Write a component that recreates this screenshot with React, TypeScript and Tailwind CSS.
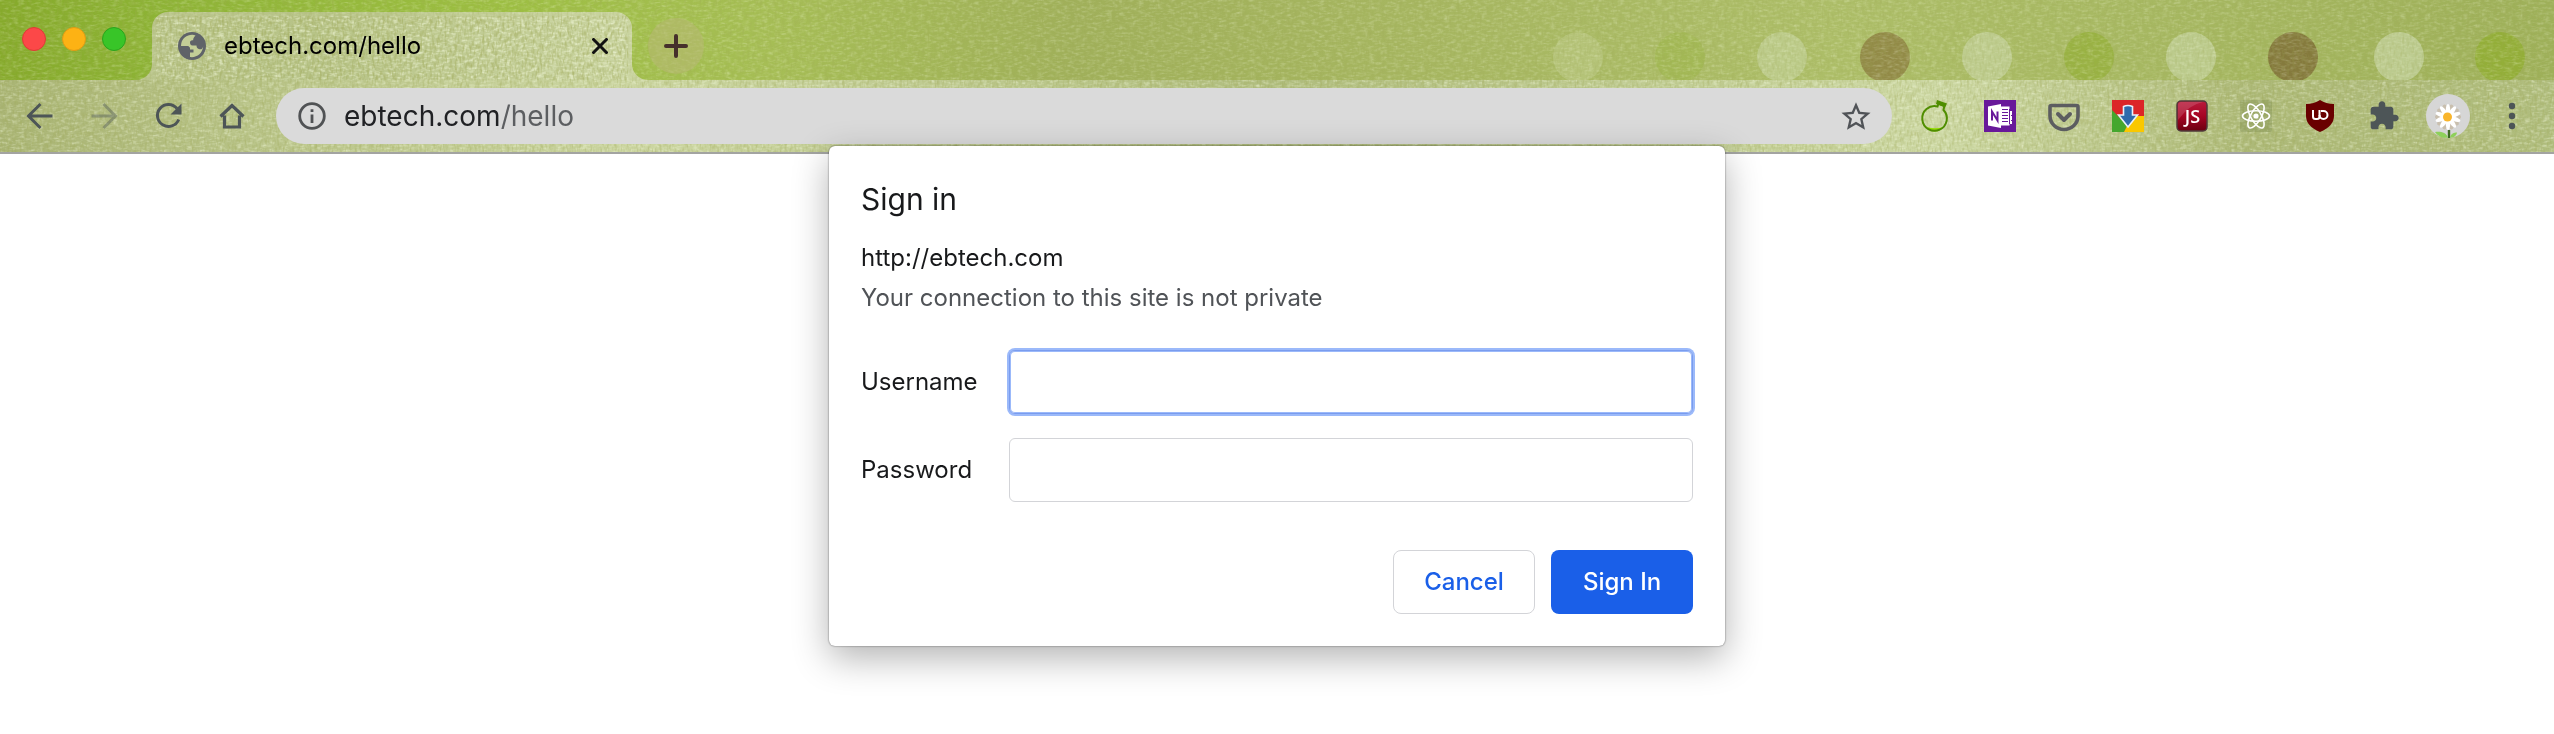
import React from "react";

const EXT = "flex h-11 w-11 shrink-0 items-center justify-center";

function Fabric() {
  const dots: [number, string, number][] = [
    [1578, "#c3d092", 0.45],
    [1680, "#93b431", 0.3],
    [1782, "#c6d3a0", 0.6],
    [1885, "#8a7a3c", 0.75],
    [1987, "#c6d3a0", 0.7],
    [2089, "#8fae2e", 0.6],
    [2191, "#c6d3a0", 0.7],
    [2293, "#7d6b35", 0.8],
    [2399, "#c6d3a0", 0.75],
    [2500, "#8fae2e", 0.75],
  ];
  return (
    <svg className="absolute inset-0 h-full w-full" aria-hidden="true">
      <defs>
        <linearGradient id="frame">
          <stop offset="0" stopColor="#86aa2b" />
          <stop offset="0.06" stopColor="#8db335" />
          <stop offset="0.2" stopColor="#9dbf42" />
          <stop offset="0.3" stopColor="#a6be55" />
          <stop offset="0.42" stopColor="#a0b05a" />
          <stop offset="0.55" stopColor="#a6b660" />
          <stop offset="0.72" stopColor="#adbe68" />
          <stop offset="1" stopColor="#9eb059" />
        </linearGradient>
        <linearGradient id="bar">
          <stop offset="0" stopColor="#a9b474" />
          <stop offset="0.1" stopColor="#b9c489" />
          <stop offset="0.25" stopColor="#ccd6a2" />
          <stop offset="0.5" stopColor="#b0bd7e" />
          <stop offset="0.76" stopColor="#cdd8a4" />
          <stop offset="0.88" stopColor="#adb978" />
          <stop offset="1" stopColor="#b0bd7e" />
        </linearGradient>
        <linearGradient id="bar-tab">
          <stop offset="0" stopColor="#bac58c" />
          <stop offset="0.35" stopColor="#b7c387" />
          <stop offset="1" stopColor="#cbd5a2" />
        </linearGradient>
        <filter id="weft" x="0" y="0" width="100%" height="100%">
          <feTurbulence type="fractalNoise" baseFrequency="0.16 0.4" numOctaves="2" seed="4" />
          <feColorMatrix values="0 0 0 0 0.95  0 0 0 0 1  0 0 0 0 0.78  2 0 0 0 -0.85" />
        </filter>
        <filter id="warp" x="0" y="0" width="100%" height="100%">
          <feTurbulence type="fractalNoise" baseFrequency="0.4 0.16" numOctaves="2" seed="9" />
          <feColorMatrix values="0 0 0 0 0.35  0 0 0 0 0.4  0 0 0 0 0.1  2 0 0 0 -0.85" />
        </filter>
      </defs>
      <rect width="100%" height="80" fill="url(#frame)" />
      {dots.map(([cx, fill, o]) => (
        <circle key={cx} cx={cx} cy="57" r="25" fill={fill} opacity={o} />
      ))}
      <rect y="80" width="100%" height="72" fill="url(#bar)" />
      <path
        d="M136 80 A16 16 0 0 0 152 64 V28 A16 16 0 0 1 168 12 H616 A16 16 0 0 1 632 28 V64 A16 16 0 0 0 648 80 Z"
        fill="url(#bar-tab)"
      />
      <g opacity="0.3">
        <rect width="100%" height="80" filter="url(#weft)" />
        <rect width="100%" height="80" filter="url(#warp)" />
      </g>
      <g opacity="0.5">
        <rect y="80" width="100%" height="72" filter="url(#weft)" />
        <rect y="80" width="100%" height="72" filter="url(#warp)" />
        <rect x="156" y="16" width="472" height="64" filter="url(#weft)" />
        <rect x="156" y="16" width="472" height="64" filter="url(#warp)" />
      </g>
    </svg>
  );
}

function TabStrip() {
  return (
    <div className="relative flex h-20 items-stretch">
      <div className="flex w-[152px] shrink-0 items-center gap-4 pb-0.5 pl-[22px]">
        <button aria-label="Close window" className="h-6 w-6 rounded-full border border-[#dd3b35] bg-[#fc4848]" />
        <button aria-label="Minimize window" className="h-6 w-6 rounded-full border border-[#df9a14] bg-[#fdb214]" />
        <button aria-label="Zoom window" className="h-6 w-6 rounded-full border border-[#2ba21d] bg-[#38c528]" />
      </div>
      <div className="mt-3 flex w-[480px] shrink-0 items-center pr-5 pl-[26px]">
        <svg className="h-7 w-7 shrink-0" viewBox="0 0 28 28" aria-hidden="true">
          <circle cx="14" cy="14" r="14" fill="#5f6368" />
          <path
            d="M14.500 2.800C8.800 2.600 4.300 6.300 3.200 11.800L3 14H8.500C11 14 12 15.500 12 17.500H15.500V20.500H12V25C18.500 26 24.500 21.500 25.200 14.500C24.500 16.800 23.500 17.500 21.500 17.300C19.500 17 18.500 15.500 18.500 13.500H14.500C12.500 13.500 12 12 12 10.500C12 8.500 13.500 8.300 15.200 8.200C15 6.500 15.800 5.300 17.500 3.500C16.500 3 15.500 2.800 14.500 2.800Z"
            fill="#c3ce97"
          />
          <path d="M3.200 14H8.500C11 14 12 15.500 12 17.500V25C6.500 24.200 2.800 19.500 3.200 14Z" fill="#5f6368" />
        </svg>
        <span className="ml-[18px] grow text-2xl text-black">ebtech.com/hello</span>
        <button aria-label="Close tab" className="flex h-6 w-6 items-center justify-center">
          <svg className="h-4 w-4" viewBox="0 0 16 16" stroke="#111" strokeWidth="3" aria-hidden="true">
            <path d="M0.500 0.500 15.500 15.500M15.500 0.500 0.500 15.500" />
          </svg>
        </button>
      </div>
      <button aria-label="New tab" className="mt-[18px] ml-4 flex h-14 w-14 items-center justify-center rounded-full bg-[#b9b878]/50">
        <svg className="h-6 w-6" viewBox="0 0 24 24" stroke="#46302b" strokeWidth="4" strokeLinecap="round" aria-hidden="true">
          <path d="M12 2V22M2 12H22" />
        </svg>
      </button>
    </div>
  );
}

function Daisy() {
  const a = [0, 36, 72, 108, 144, 180, 216, 252, 288, 324];
  return (
    <svg className="h-11 w-11" viewBox="0 0 44 44" aria-hidden="true">
      <circle cx="22" cy="22" r="22" fill="#d6d6d6" />
      {a.map((d) => (
        <ellipse key={d} cx="22" cy="14.500" rx="2.400" ry="4.500" fill="#c9bfae" transform={`rotate(${d + 18} 22 23)`} />
      ))}
      {a.map((d) => (
        <ellipse key={d} cx="22" cy="16" rx="2.200" ry="6" fill="#fff" transform={`rotate(${d} 22 23)`} />
      ))}
      <path d="M23 36V44" stroke="#3d6b22" strokeWidth="2.400" />
      <path d="M22 43.500C16 45 11 41 9 38c5-1 11 0 13 5.500zM24 43.500c1-4 4-5 7-5-.5 3-3 5.500-7 5z" fill="#8ed05a" />
      <circle cx="21.500" cy="23" r="4.500" fill="#f9b52c" />
    </svg>
  );
}

function Toolbar() {
  return (
    <div className="relative flex h-[72px] items-center pl-5 text-[#4d5557]">
      <div className="flex gap-6">
        <button aria-label="Back" className="flex h-10 w-10 items-center justify-center">
          <svg className="h-8 w-8" viewBox="0 0 32 32" fill="none" stroke="currentColor" strokeWidth="3" aria-hidden="true">
            <path d="M28.500 16H5M16.500 4 4.500 16 16.500 28" />
          </svg>
        </button>
        <button aria-label="Forward" className="flex h-10 w-10 items-center justify-center opacity-40">
          <svg className="h-8 w-8" viewBox="0 0 32 32" fill="none" stroke="currentColor" strokeWidth="3" aria-hidden="true">
            <path d="M3.500 16H27M15.500 4 27.500 16 15.500 28" />
          </svg>
        </button>
        <button aria-label="Reload" className="flex h-10 w-10 items-center justify-center">
          <svg className="h-8 w-8" viewBox="0 0 32 32" fill="none" stroke="currentColor" strokeWidth="3" aria-hidden="true">
            <path d="M25 8.500A11 11 0 1 0 26.700 19.500" />
            <path d="M29.500 3.500V14.500H18.500Z" fill="currentColor" stroke="none" />
          </svg>
        </button>
        <button aria-label="Home" className="flex h-10 w-10 items-center justify-center">
          <svg className="h-8 w-8" viewBox="0 0 32 32" fill="none" stroke="currentColor" strokeWidth="3.200" aria-hidden="true">
            <path d="M8.500 15.500V27H23.500V15.500M4.500 16.500 16 5.500 27.500 16.500" />
          </svg>
        </button>
      </div>
      <div className="ml-6 flex h-14 grow items-center rounded-full bg-[#dadada] pr-5 pl-[22px]">
        <svg className="h-7 w-7 shrink-0" viewBox="0 0 28 28" fill="none" stroke="#505254" strokeWidth="2.800" aria-hidden="true">
          <circle cx="14" cy="14" r="12.300" />
          <path d="M14 12.500V21M14 7.200V10" />
        </svg>
        <div className="ml-[18px] grow text-[28px] text-[#202124]">
          ebtech.com<span className="text-[#5c5e61]">/hello</span>
        </div>
        <button aria-label="Bookmark this tab" className="flex h-8 w-8 items-center justify-center">
          <svg className="h-8 w-8 overflow-visible" viewBox="1 0.500 22 22" fill="#505357" aria-hidden="true">
            <path d="M22 9.240l-7.190-.62L12 2 9.190 8.630 2 9.240l5.460 4.730L5.820 21 12 17.270 18.180 21l-1.630-7.030L22 9.240zM12 15.400l-3.760 2.270 1-4.280-3.320-2.880 4.380-.38L12 6.100l1.710 4.040 4.380.38-3.320 2.880 1 4.280L12 15.400z" />
          </svg>
        </button>
      </div>
      <div className="ml-[22px] flex gap-5 pr-5">
        <button aria-label="Flask" className={EXT}>
          <svg className="h-8 w-8 overflow-visible" viewBox="-1 0 32 32" aria-hidden="true">
            <path d="M6 27Q14 29.500 22 27Q19 31.500 14 31.500T6 27z" fill="#93dd00" />
            <path d="M16.500 6.500A12.300 12.300 0 1 0 22.500 10L23.500 5.500L17.500 3.500Z" fill="none" stroke="#4f8d00" strokeWidth="2" />
            <path d="M16 0 26 3.500 24 7.500 15 4Z" fill="#4f8d00" />
          </svg>
        </button>
        <button aria-label="OneNote" className={EXT}>
          <svg className="h-8 w-8" viewBox="0 0 32 32" aria-hidden="true">
            <rect width="32" height="32" fill="#68199a" />
            <path d="M17 6.500H25.500V11H28V15H27V16H28V20H27V21H28V24H25.500V25.500H17Z" fill="#fff" />
            <path d="M18 9.500H24M18 12.500H24M18 15.500H24M18 18.500H24M18 21.500H24M25.500 9V24" stroke="#68199a" strokeWidth="1" />
            <path d="M4 6.500 17 4V28L4 25.500Z" fill="#fff" />
            <path d="M8 20.500V11.500L13.500 20.500V11.500" fill="none" stroke="#68199a" strokeWidth="2" />
          </svg>
        </button>
        <button aria-label="Pocket" className={EXT}>
          <svg className="h-8 w-8" viewBox="0 0 32 32" fill="none" stroke="#5c5d60" strokeWidth="3.600" strokeLinecap="round" strokeLinejoin="round" aria-hidden="true">
            <path d="M3.500 5.500H28.500Q30 5.500 30 7V16A14 13.500 0 0 1 2 16V7Q2 5.500 3.500 5.500Z" />
            <path d="M10 14 16 20 22 14" strokeWidth="4" />
          </svg>
        </button>
        <button aria-label="Downloads" className={EXT}>
          <svg className="h-8 w-8" viewBox="0 0 32 32" aria-hidden="true">
            <rect width="32" height="32" fill="#dc2528" />
            <path d="M0 10 16 26 12 32H0Z" fill="#45a72e" />
            <path d="M12 32 20 16H32V32Z" fill="#fac800" />
            <path d="M11.500 6.500Q16 4.500 20.500 6.500V15H25.500L16 27 6.500 15H11.500Z" fill="#2f6bac" stroke="#e9f1fa" strokeWidth="1.600" />
          </svg>
        </button>
        <button aria-label="Toggle JavaScript" className={EXT}>
          <svg className="h-8 w-8" viewBox="0 0 32 32" aria-hidden="true">
            <linearGradient id="js" x2="0" y2="1">
              <stop offset="0" stopColor="#b91b3c" />
              <stop offset="0.5" stopColor="#a60524" />
              <stop offset="1" stopColor="#6b0010" />
            </linearGradient>
            <rect x="1" y="1" width="30" height="30" rx="4" fill="url(#js)" stroke="#503b3b" strokeWidth="1.500" />
            <path d="M2 15V5Q2 2 5 2H27Q14 4 2 20Z" fill="#fff" opacity="0.15" />
            <text x="16.500" y="22.500" textAnchor="middle" fontFamily="'Liberation Sans Narrow', 'Open Sans', sans-serif" fontSize="18" fontWeight="600" fill="#fff">JS</text>
          </svg>
        </button>
        <button aria-label="React Developer Tools" className={EXT}>
          <svg className="h-8 w-8" viewBox="0 0 32 32" fill="none" stroke="#fff" strokeWidth="1.600" aria-hidden="true">
            <rect width="32" height="32" rx="2" fill="#5f7038" fillOpacity="0.22" stroke="none" />
            <ellipse cx="16" cy="16" rx="13.500" ry="5.200" />
            <ellipse cx="16" cy="16" rx="13.500" ry="5.200" transform="rotate(60 16 16)" />
            <ellipse cx="16" cy="16" rx="13.500" ry="5.200" transform="rotate(120 16 16)" />
            <circle cx="16" cy="16" r="2.600" fill="#fff" stroke="none" />
          </svg>
        </button>
        <button aria-label="uBlock Origin" className={EXT}>
          <svg className="h-8 w-8" viewBox="0 0 32 32" aria-hidden="true">
            <path d="M16 0Q22 4 30 4V16Q30 26 16 32Q2 26 2 16V4Q10 4 16 0Z" fill="#690000" />
            <path d="M9 10V16.500Q9 19 11.500 19H13Q15.500 19 15.500 16.500V10" fill="none" stroke="#fff" strokeWidth="2" />
            <path d="M17 11H19.500A4 4 0 1 1 15.500 15" fill="none" stroke="#fff" strokeWidth="2" />
          </svg>
        </button>
        <button aria-label="Extensions" className={EXT}>
          <svg className="h-8 w-8" viewBox="0 0 24 24" fill="currentColor" aria-hidden="true">
            <path d="M20.500 11H19V7c0-1.100-.9-2-2-2h-4V3.500C13 2.120 11.880 1 10.500 1S8 2.120 8 3.500V5H4c-1.100 0-1.990.9-1.990 2v3.800H3.500c1.490 0 2.700 1.210 2.700 2.700s-1.210 2.700-2.700 2.700H2V20c0 1.100.9 2 2 2h3.800v-1.500c0-1.490 1.210-2.700 2.700-2.700 1.490 0 2.700 1.210 2.700 2.700V22H17c1.100 0 2-.9 2-2v-4h1.500c1.380 0 2.500-1.120 2.500-2.500S21.880 11 20.500 11z" />
          </svg>
        </button>
        <button aria-label="Profile" className={EXT}>
          <Daisy />
        </button>
        <button aria-label="Menu" className={EXT}>
          <svg className="h-8 w-8" viewBox="0 0 32 32" fill="currentColor" aria-hidden="true">
            <circle cx="16" cy="6" r="3.200" />
            <circle cx="16" cy="16" r="3.200" />
            <circle cx="16" cy="26" r="3.200" />
          </svg>
        </button>
      </div>
    </div>
  );
}

function SignInDialog() {
  return (
    <form
      role="dialog"
      aria-labelledby="dialog-title"
      onSubmit={(e) => e.preventDefault()}
      className="absolute top-[146px] left-1/2 w-[896px] -translate-x-1/2 rounded-md bg-white p-8 text-2xl text-[#18191b] shadow-[0_0_2px_rgba(0,0,0,0.6),0_12px_36px_rgba(0,0,0,0.3)]"
    >
      <h1 id="dialog-title" className="text-[30px] leading-[42px]">Sign in</h1>
      <p className="mt-[18px] leading-10">http://ebtech.com</p>
      <p className="leading-10 text-[#505357]">Your connection to this site is not private</p>
      <div className="mt-8 grid grid-cols-[148px_1fr] items-center gap-y-6">
        <label htmlFor="username">Username</label>
        <input
          id="username"
          type="text"
          className="h-16 w-full rounded-md border border-[#7a9cee] bg-white px-4 shadow-[0_0_0_2px_#9bb9fa,inset_0_0_0_1px_#9bb9fa] outline-none"
        />
        <label htmlFor="password">Password</label>
        <input id="password" type="password" className="h-16 w-full rounded-md border border-[#d3d4d8] bg-white px-4 outline-none" />
      </div>
      <div className="mt-12 flex justify-end gap-4 font-medium">
        <button type="button" className="h-16 w-[142px] rounded-lg border border-[#d3d4d8] text-[#1a5fe8]">Cancel</button>
        <button type="submit" className="h-16 w-[142px] rounded-lg bg-[#1a5fe8] text-white">Sign In</button>
      </div>
    </form>
  );
}

export default function App() {
  return (
    <div className="relative min-h-screen overflow-hidden bg-white font-['Inter',sans-serif]">
      <header className="relative border-b-2 border-[#a3a4a1]">
        <Fabric />
        <TabStrip />
        <Toolbar />
      </header>
      <SignInDialog />
    </div>
  );
}
